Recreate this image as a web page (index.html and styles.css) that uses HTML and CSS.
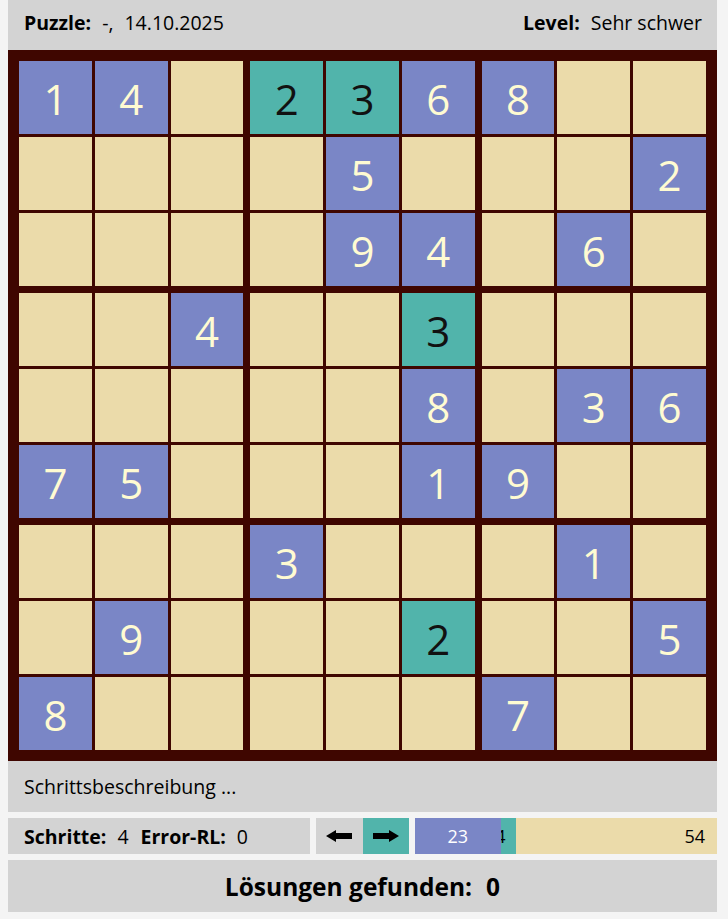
FILE: index.html
```html
<!DOCTYPE html>
<html lang="de">
<head>
<meta charset="utf-8">
<title>Sudoku</title>
<link rel="stylesheet" href="styles.css">
</head>
<body>
<div class="app">
  <header class="topbar">
    <div class="info"><b class="label">Puzzle:</b><span class="val">-,</span><span class="val">14.10.2025</span></div>
    <div class="info"><b class="label">Level:</b><span class="val">Sehr schwer</span></div>
  </header>

  <div class="board">
    <div class="box">
      <div class="cell given">1</div><div class="cell given">4</div><div class="cell"></div>
      <div class="cell"></div><div class="cell"></div><div class="cell"></div>
      <div class="cell"></div><div class="cell"></div><div class="cell"></div>
    </div>
    <div class="box">
      <div class="cell solved">2</div><div class="cell solved">3</div><div class="cell given">6</div>
      <div class="cell"></div><div class="cell given">5</div><div class="cell"></div>
      <div class="cell"></div><div class="cell given">9</div><div class="cell given">4</div>
    </div>
    <div class="box">
      <div class="cell given">8</div><div class="cell"></div><div class="cell"></div>
      <div class="cell"></div><div class="cell"></div><div class="cell given">2</div>
      <div class="cell"></div><div class="cell given">6</div><div class="cell"></div>
    </div>
    <div class="box">
      <div class="cell"></div><div class="cell"></div><div class="cell given">4</div>
      <div class="cell"></div><div class="cell"></div><div class="cell"></div>
      <div class="cell given">7</div><div class="cell given">5</div><div class="cell"></div>
    </div>
    <div class="box">
      <div class="cell"></div><div class="cell"></div><div class="cell solved">3</div>
      <div class="cell"></div><div class="cell"></div><div class="cell given">8</div>
      <div class="cell"></div><div class="cell"></div><div class="cell given">1</div>
    </div>
    <div class="box">
      <div class="cell"></div><div class="cell"></div><div class="cell"></div>
      <div class="cell"></div><div class="cell given">3</div><div class="cell given">6</div>
      <div class="cell given">9</div><div class="cell"></div><div class="cell"></div>
    </div>
    <div class="box">
      <div class="cell"></div><div class="cell"></div><div class="cell"></div>
      <div class="cell"></div><div class="cell given">9</div><div class="cell"></div>
      <div class="cell given">8</div><div class="cell"></div><div class="cell"></div>
    </div>
    <div class="box">
      <div class="cell given">3</div><div class="cell"></div><div class="cell"></div>
      <div class="cell"></div><div class="cell"></div><div class="cell solved">2</div>
      <div class="cell"></div><div class="cell"></div><div class="cell"></div>
    </div>
    <div class="box">
      <div class="cell"></div><div class="cell given">1</div><div class="cell"></div>
      <div class="cell"></div><div class="cell"></div><div class="cell given">5</div>
      <div class="cell given">7</div><div class="cell"></div><div class="cell"></div>
    </div>
  </div>

  <div class="description">Schrittsbeschreibung ...</div>

  <div class="controls">
    <div class="stats"><b class="label">Schritte:</b><span class="val">4</span><b class="label next">Error-RL:</b><span class="val">0</span></div>
    <div class="nav">
      <button class="navbtn" type="button" aria-label="Zurück">
        <svg width="26" height="12" viewBox="0 0 26 12"><polygon points="0,6 10,0 10,3 26,3 26,9 10,9 10,12" fill="#000"/></svg>
      </button>
      <button class="navbtn active" type="button" aria-label="Weiter">
        <svg width="26" height="12" viewBox="0 0 26 12"><polygon points="26,6 16,0 16,3 0,3 0,9 16,9 16,12" fill="#000"/></svg>
      </button>
    </div>
    <div class="progress">
      <div class="seg seg-given" style="width:28.395%">23</div>
      <div class="seg seg-solved" style="width:4.938%">4</div>
      <div class="seg seg-open" style="width:66.667%">54</div>
    </div>
  </div>

  <div class="solutions"><b>Lösungen gefunden:</b><b class="count">0</b></div>
</div>
</body>
</html>
```

FILE: styles.css
```css
html, body {
  margin: 0;
  padding: 0;
  background: #f4f4f4;
}
body {
  padding: 0 8px;
  font-family: "Open Sans", "Noto Sans", sans-serif;
  color: #000;
}
.app {
  width: 709px;
  display: flex;
  flex-direction: column;
}
.topbar {
  height: 50px;
  background: #d3d3d3;
  display: flex;
  align-items: center;
  justify-content: space-between;
  padding: 0 15px 6px 16px;
  box-sizing: border-box;
  font-size: 19.5px;
}
.info {
  display: flex;
  align-items: baseline;
}
.val {
  margin-left: 11px;
}
.board {
  background: #3f0600;
  padding: 11px;
  display: grid;
  grid-template-columns: repeat(3, 1fr);
  gap: 7px;
}
.box {
  display: grid;
  grid-template-columns: repeat(3, 1fr);
  grid-auto-rows: 73px;
  gap: 3px;
}
.cell {
  background: #ebdbaa;
  display: flex;
  align-items: center;
  justify-content: center;
  font-size: 42px;
  padding-top: 2px;
  box-sizing: border-box;
}
.cell.given {
  background: #7a86c6;
  color: #fffbd2;
}
.cell.solved {
  background: #51b4ab;
  color: #111;
}
.description {
  height: 51px;
  background: #d3d3d3;
  display: flex;
  align-items: center;
  padding: 0 16px;
  font-size: 19.5px;
}
.controls {
  display: flex;
  gap: 6px;
  height: 36px;
  margin: 6px 0;
}
.stats {
  width: 302px;
  flex: none;
  background: #d3d3d3;
  display: flex;
  align-items: center;
  padding: 0 16px;
  box-sizing: border-box;
  font-size: 19.5px;
}
.stats .val {
  margin-left: 11px;
}
.stats .next {
  margin-left: 12px;
}
.nav {
  width: 93px;
  flex: none;
  display: flex;
}
.navbtn {
  flex: 1;
  border: 0;
  margin: 0;
  padding: 0;
  background: #d3d3d3;
  display: flex;
  align-items: center;
  justify-content: center;
}
.navbtn.active {
  background: #51b4ab;
}
.progress {
  flex: 1;
  display: flex;
  font-size: 18px;
}
.seg {
  flex: none;
  box-sizing: border-box;
  overflow: hidden;
  display: flex;
  align-items: center;
  white-space: nowrap;
}
.seg-given {
  background: #7a86c6;
  color: #fff;
  justify-content: center;
}
.seg-solved {
  background: #51b4ab;
  justify-content: flex-end;
  padding-right: 10px;
}
.seg-open {
  background: #ebdbaa;
  justify-content: flex-end;
  padding-right: 12px;
}
.solutions {
  height: 52px;
  background: #d3d3d3;
  display: flex;
  align-items: center;
  justify-content: center;
  font-size: 24.5px;
}
.solutions .count {
  margin-left: 14px;
}
```
